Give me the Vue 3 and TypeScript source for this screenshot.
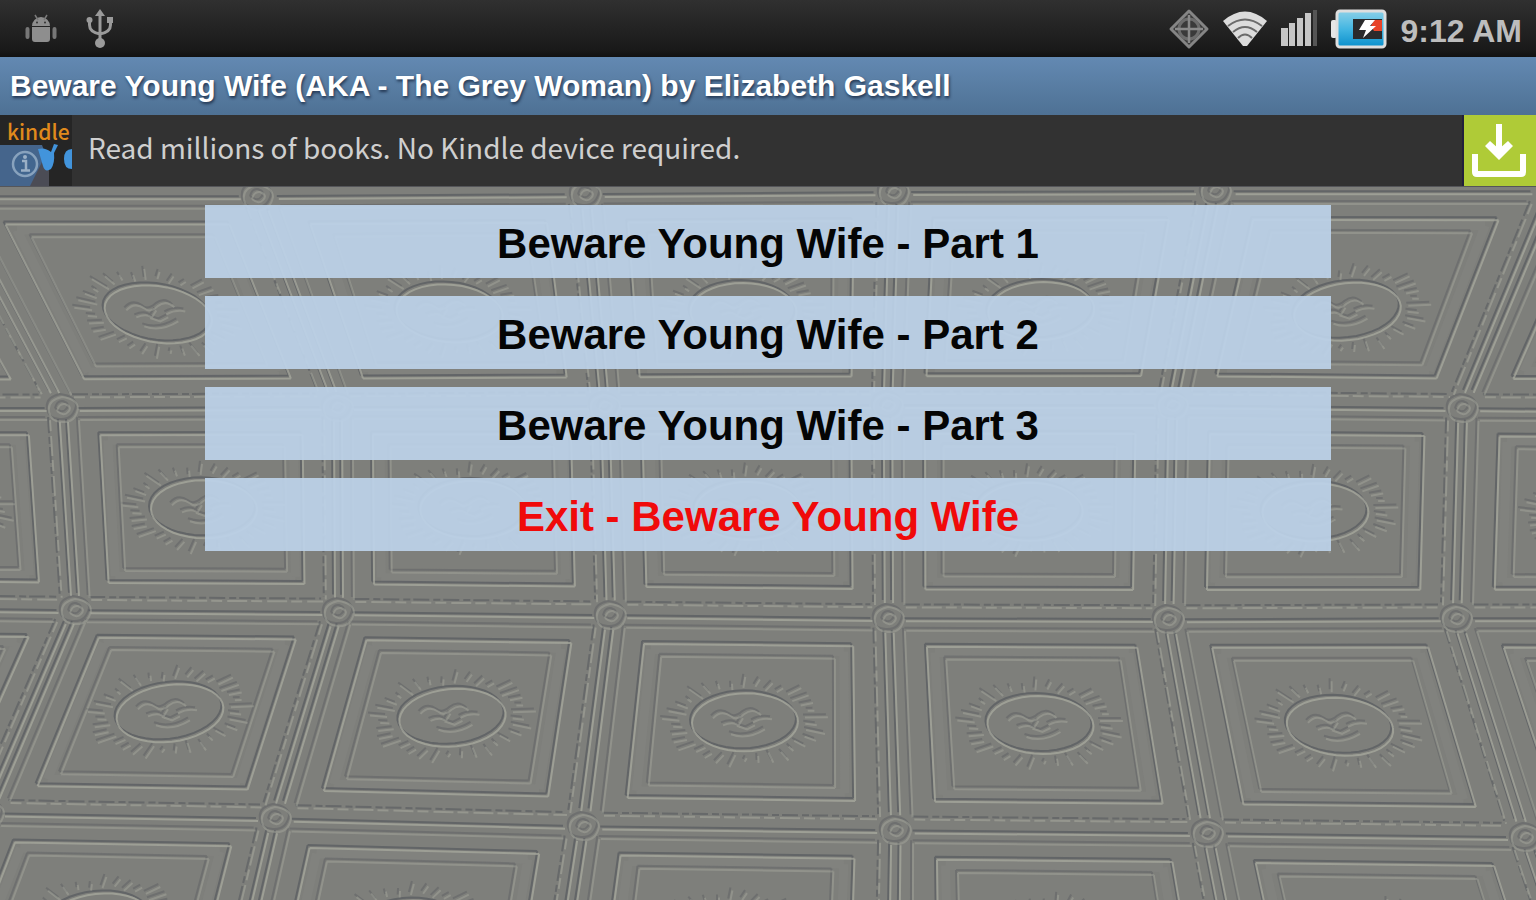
<script setup lang="ts">
interface Point {
  x: number
  y: number
}
interface Menu {
  label: string
  exit?: boolean
}

const items: Menu[] = [
  { label: 'Beware Young Wife - Part 1' },
  { label: 'Beware Young Wife - Part 2' },
  { label: 'Beware Young Wife - Part 3' },
  { label: 'Exit - Beware Young Wife', exit: true },
]

// Corners of the pressed-tin ceiling panels, one list per row
const rows: number[][][] = [
  [[-380, 195], [-50, 195], [257, 195], [585, 193], [893, 191], [1215, 190], [1553, 190], [1880, 190]],
  [[-215, 407], [62, 407], [337, 406], [604, 405], [887, 404], [1172, 404], [1462, 407], [1750, 409]],
  [[-195, 606], [75, 609], [338, 611], [610, 614], [888, 617], [1168, 618], [1456, 617], [1740, 617]],
  [[-310, 808], [-12, 812], [275, 817], [583, 825], [895, 829], [1207, 832], [1525, 836], [1840, 840]],
  [[-420, 1020], [-100, 1025], [225, 1032], [550, 1040], [892, 1046], [1250, 1050], [1600, 1056], [1930, 1060]],
]

function at(r: number, c: number, u: number, v: number): Point {
  const [a, b, d, e] = [rows[r][c], rows[r][c + 1], rows[r + 1][c], rows[r + 1][c + 1]]
  const mix = (k: number) =>
    (a[k] * (1 - u) + b[k] * u) * (1 - v) + (d[k] * (1 - u) + e[k] * u) * v
  return { x: Math.round(mix(0) * 10) / 10, y: Math.round(mix(1) * 10) / 10 }
}

const line = (p: Point, q: Point) => `M${p.x} ${p.y}L${q.x} ${q.y}`

let strong = ''
let soft = ''
let beads = ''
let wide = ''

for (let r = 0; r < rows.length - 1; r++) {
  for (let c = 0; c < rows[r].length - 1; c++) {
    const p = (u: number, v: number) => at(r, c, u, v)
    const frame = (u: number, v: number) =>
      line(p(u, v), p(1 - u, v)) + line(p(1 - u, v), p(1 - u, 1 - v)) +
      line(p(1 - u, 1 - v), p(u, 1 - v)) + line(p(u, 1 - v), p(u, v))

    strong += frame(0.13, 0.135)
    soft += frame(0.195, 0.195)
    wide += frame(0.16, 0.165)
    strong += line(p(0.015, 0.07), p(0.015, 0.93)) + line(p(0.06, 0.015), p(0.94, 0.015))
    strong += line(p(0.985, 0.07), p(0.985, 0.93))
    soft += line(p(0.06, 0.06), p(0.94, 0.06)) + line(p(0.055, 0.06), p(0.055, 0.94))
    beads += line(p(0.06, 0.95), p(0.94, 0.95)) + line(p(0.95, 0.06), p(0.95, 0.94))

    // Sun medallion: rim, face and rays
    const m = p(0.5, r === 0 ? 0.56 : 0.5)
    const lean = (p(0.5, 0).x - p(0.5, 1).x) / 200
    const polar = (rad: number, ang: number): Point => {
      const y = Math.sin(ang) * rad * 29
      return {
        x: Math.round((m.x + Math.cos(ang) * rad * 53 - y * lean * 0.6) * 10) / 10,
        y: Math.round((m.y + y + Math.cos(ang) * (lean > 0 ? -4 : 4) * rad * Math.abs(lean)) * 10) / 10,
      }
    }
    let ring = ''
    for (let i = 0; i <= 40; i++) {
      const q = polar(1, (i / 40) * Math.PI * 2)
      ring += `${i ? 'L' : 'M'}${q.x} ${q.y}`
    }
    strong += ring
    for (let i = 0; i < 34; i++) {
      const ang = (i / 34) * Math.PI * 2 + 0.05
      soft += line(polar(1.14 + (i % 3) * 0.05, ang), polar(1.36 + ((i * 7) % 4) * 0.07, ang + 0.03))
    }
    soft += `M${m.x - 32} ${m.y - 4}q8 -9 18 -2q5 5 13 -2q9 -7 17 1M${m.x - 22} ${m.y + 3}q12 -5 17 2` +
      `M${m.x - 2} ${m.y - 4}l-5 8l9 3l8 -4M${m.x + 8} ${m.y}q9 -5 19 -3M${m.x - 14} ${m.y + 12}q16 6 34 -5`

    // Rosette on each crossing
    const n = rows[r][c]
    soft += `M${n[0] - 14} ${n[1] + 4}q-2 -12 13 -15q16 2 16 12q-3 14 -16 13q-11 0 -13 -10`
    soft += `M${n[0] - 6} ${n[1] + 3}q2 -8 8 -7q8 3 3 8q-4 5 -11 -1`
  }
}
</script>

<template>
  <div class="screen">
    <header class="status">
      <div class="group">
        <svg class="droid" width="34" height="34" viewBox="0 0 34 34" aria-hidden="true">
          <path d="M8 14a9 9 0 0 1 18 0zM8 15h18v12q0 3-3 3H11q-3 0-3-3z" fill="#8e8e8e" />
          <path d="M11 3l3 5M23 3l-3 5" stroke="#7a7a7a" stroke-width="1.500" />
          <path d="M3.500 17v8M30.500 17v8" stroke="#777" stroke-width="4" stroke-linecap="round" />
          <circle cx="13" cy="10.500" r="1" fill="#333" /><circle cx="21" cy="10.500" r="1" fill="#333" />
        </svg>
        <svg width="28" height="40" viewBox="0 0 28 40" aria-hidden="true">
          <g fill="none" stroke="#9a9a9a" stroke-width="3">
            <path d="M14 5v29M3.500 12v4q0 7 10.500 9q10.500-2 10.500-9v-4" />
          </g>
          <g fill="#9a9a9a">
            <path d="M14 0l5 7H9z" /><circle cx="14" cy="34" r="5" />
            <circle cx="3.500" cy="11" r="3" /><rect x="21" y="8" width="6" height="6" />
          </g>
        </svg>
      </div>
      <div class="group right">
        <svg width="42" height="42" viewBox="0 0 42 42" aria-hidden="true">
          <path d="M21 3L39 21L21 39L3 21Z" fill="#3a3a3a" stroke="#858585" stroke-width="3" stroke-linejoin="round" />
          <circle cx="21" cy="21" r="10" fill="none" stroke="#6c6c6c" stroke-width="3" />
          <path d="M21 7v28M7 21h28" stroke="#8a8a8a" stroke-width="2.500" />
        </svg>
        <svg class="wifi" width="44" height="36" viewBox="0 0 44 36" aria-hidden="true">
          <path d="M0 10Q22-9 44 10L24 35H20Z" fill="#dcdcdc" />
          <g fill="none" stroke="#6b6b6b" stroke-width="2">
            <path d="M5 15Q22 2 39 15M10 21Q22 11 34 21M15 27Q22 20 29 27" />
          </g>
        </svg>
        <svg class="bars" width="38" height="37" viewBox="0 0 38 37" aria-hidden="true">
          <g fill="#c6c6c6">
            <rect x="1" y="18" width="7" height="18" /><rect x="9" y="13" width="6" height="23" />
            <rect x="17" y="8" width="6" height="28" /><rect x="25" y="3" width="6" height="33" />
          </g>
          <rect x="33" y="0" width="4" height="36" fill="#555" />
        </svg>
        <svg class="battery" width="56" height="40" viewBox="0 0 56 40" aria-hidden="true">
          <defs>
            <linearGradient id="cell" x1="0" y1="0" x2="0" y2="1">
              <stop offset="0" stop-color="#8bd0e8" /><stop offset=".5" stop-color="#43b6e2" /><stop offset="1" stop-color="#0a8fcc" />
            </linearGradient>
          </defs>
          <rect x="0" y="11" width="6" height="18" rx="2" fill="#e6e6e6" />
          <rect x="6" y="2" width="48" height="36" rx="3" fill="url(#cell)" stroke="#dedede" stroke-width="3" />
          <rect x="22" y="10" width="29" height="20" fill="#2a2a2c" />
          <path d="M43 11h8v11h-8l-3-5z" fill="#e8442a" />
          <path d="M34 11h10l-5 6h6L32 29l3-8h-7z" fill="#fff" />
        </svg>
        <time class="clock">9:12 AM</time>
      </div>
    </header>

    <h1 class="title">Beware Young Wife (AKA - The Grey Woman) by Elizabeth Gaskell</h1>

    <aside class="ad">
      <svg class="kindle" width="72" height="71" viewBox="0 0 72 71" role="img" aria-label="kindle">
        <rect width="72" height="71" fill="#252525" />
        <path d="M0 30h42l7 18v23H0z" fill="#45658c" />
        <path d="M30 71l12-24l7 8v16z" fill="#4b4c55" />
        <path d="M38 34q7-2 13 3l3-8l4 1l-4 8q1 10-3 16q-6 4-8-3z" fill="#4294dc" />
        <path d="M72 34q-8 0-8 10t8 10z" fill="#4294dc" />
        <circle cx="25" cy="49" r="12" fill="#42668f" stroke="#88a2bd" stroke-width="2.500" />
        <path d="M22 46h4v9M21 55.500h9" fill="none" stroke="#9bb0c6" stroke-width="2.500" />
        <circle cx="25" cy="42" r="2" fill="#9bb0c6" />
        <text x="7" y="25" class="brand">kindle</text>
      </svg>
      <p class="pitch">Read millions of books. No Kindle device required.</p>
      <button class="download" type="button" aria-label="Download">
        <svg width="72" height="71" viewBox="0 0 72 71" aria-hidden="true">
          <path d="M35 9v28" stroke="#fff" stroke-width="6" fill="none" />
          <path d="M21 31l5-5l9 8l9-8l5 5l-14 14z" fill="#fff" />
          <path d="M11 39v18q0 2 2 2h44q2 0 2-2V39" fill="none" stroke="#fff" stroke-width="6" />
        </svg>
      </button>
    </aside>

    <main class="stage">
      <svg class="ceiling" viewBox="0 187 1536 713" preserveAspectRatio="xMidYMin slice" aria-hidden="true">
        <defs>
          <filter id="relief" x="0" y="0" width="1" height="1" color-interpolation-filters="sRGB">
            <feGaussianBlur stdDeviation="0.7" />
          </filter>
        </defs>
        <rect y="187" width="1536" height="713" fill="#7e7f7b" />
        <g fill="none" filter="url(#relief)">
          <path :d="wide" stroke="#878884" stroke-width="9" opacity=".4" />
          <g transform="translate(-1 -2)" stroke="#50535a">
            <path :d="strong" stroke-width="2" opacity=".6" />
            <path :d="soft" stroke-width="2" opacity=".35" />
            <path :d="beads" stroke-width="2" stroke-dasharray="16 4 7 3" opacity=".5" />
          </g>
          <g transform="translate(1 1)" stroke="#abada1">
            <path :d="strong" stroke-width="2" opacity=".7" />
            <path :d="soft" stroke-width="2" opacity=".42" />
            <path :d="beads" stroke-width="2" stroke-dasharray="11 5 20 4" opacity=".5" />
          </g>
        </g>
      </svg>
      <nav class="menu" aria-label="Chapters">
        <button v-for="item in items" :key="item.label" type="button" class="entry" :class="{ exit: item.exit }">
          {{ item.label }}
        </button>
      </nav>
    </main>
  </div>
</template>

<style>
body {
  margin: 0;
  background: #7e7f7b;
}
</style>

<style scoped>
.screen {
  display: flex;
  flex-direction: column;
  min-height: 100vh;
  font-family: "Liberation Sans", Arial, sans-serif;
}
.status {
  display: flex;
  justify-content: space-between;
  align-items: center;
  height: 57px;
  padding: 0 14px 0 24px;
  background: linear-gradient(#303030, #191919 88%, #111);
}
.group {
  display: flex;
  align-items: center;
  gap: 28px;
}
.right {
  gap: 13px;
}
.clock {
  padding-top: 4px;
  font-size: 32px;
  font-weight: 700;
  line-height: 40px;
  color: #bdbdbd;
  white-space: nowrap;
}
.title {
  margin: 0;
  padding: 0 10px;
  font-size: 30px;
  font-weight: 700;
  line-height: 58px;
  color: #fff;
  white-space: nowrap;
  text-shadow: 1px 2px 3px rgba(20, 35, 60, 0.8);
  background: linear-gradient(#6389b2, #4e7194);
}
.ad {
  display: flex;
  align-items: flex-start;
  height: 71px;
  background: #323232;
  border-bottom: 1px solid #55565a;
}
.kindle {
  flex: none;
}
.brand {
  font-family: "Noto Sans CJK SC", sans-serif;
  font-size: 21px;
  font-weight: 500;
  fill: #e08a1c;
}
.pitch {
  flex: 1;
  margin: 0;
  padding: 0 16px;
  font-family: "Noto Sans CJK SC", sans-serif;
  font-size: 28px;
  line-height: 64px;
  color: #cfcfcf;
  white-space: nowrap;
}
.download {
  flex: none;
  display: block;
  width: 74px;
  height: 71px;
  padding: 0;
  border: 0;
  border-left: 2px solid #22203a;
  background: #afcb37;
}
.download svg {
  display: block;
}
.stage {
  position: relative;
  flex: 1;
  overflow: hidden;
}
.ceiling {
  position: absolute;
  inset: 0;
  width: 100%;
  height: 100%;
}
.menu {
  position: relative;
  display: flex;
  flex-direction: column;
  gap: 18px;
  width: 73.3%;
  margin: 0 auto;
  padding: 18px 0;
}
.entry {
  height: 73px;
  padding: 4px 16px 0;
  border: 0;
  background: rgba(188, 210, 232, 0.93);
  color: #050505;
  font-family: inherit;
  font-size: 42px;
  font-weight: 700;
  line-height: 69px;
  text-align: center;
}
.exit {
  color: #f00a0a;
}
</style>
